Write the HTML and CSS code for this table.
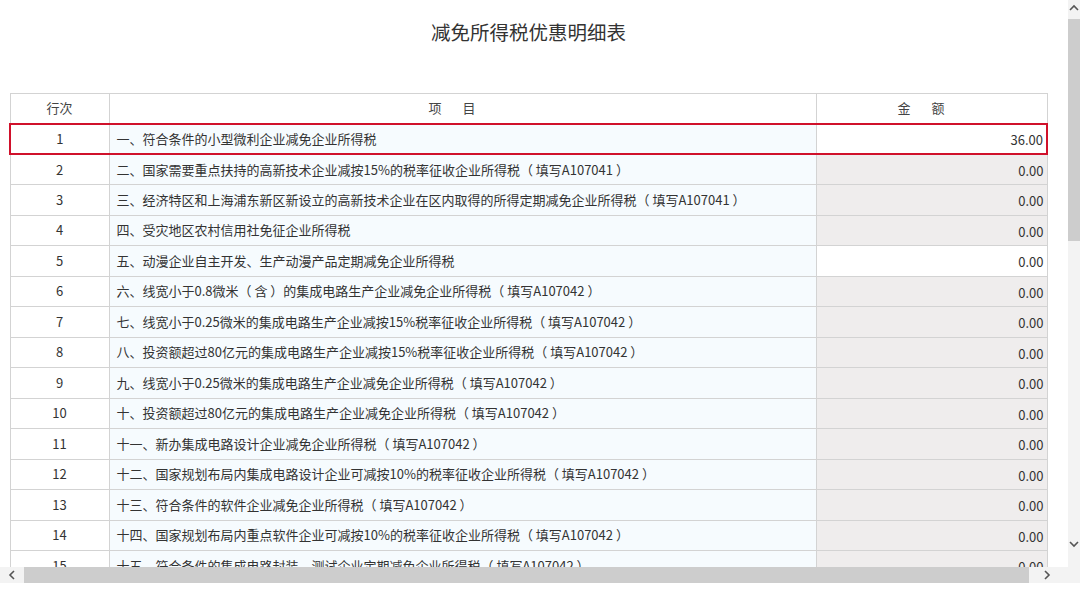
FILE: index.html
```html
<!DOCTYPE html>
<html lang="zh-CN">
<head>
<meta charset="utf-8">
<title>减免所得税优惠明细表</title>
<link rel="stylesheet" href="styles.css">
</head>
<body>
<div class="page">
  <div class="main">
    <div class="content">
      <h1 class="title">减免所得税优惠明细表</h1>
      <table class="grid">
        <colgroup><col class="c-no"><col class="c-item"><col class="c-amt"></colgroup>
        <thead>
          <tr><th>行次</th><th class="spaced">项目</th><th class="spaced">金额</th></tr>
        </thead>
        <tbody>
          <tr class="active"><td class="no">1</td><td class="item">一、符合条件的小型微利企业减免企业所得税</td><td class="amt edit">36.00</td></tr>
          <tr><td class="no">2</td><td class="item">二、国家需要重点扶持的高新技术企业减按15%的税率征收企业所得税（ 填写A107041 ）</td><td class="amt">0.00</td></tr>
          <tr><td class="no">3</td><td class="item">三、经济特区和上海浦东新区新设立的高新技术企业在区内取得的所得定期减免企业所得税（ 填写A107041 ）</td><td class="amt">0.00</td></tr>
          <tr><td class="no">4</td><td class="item">四、受灾地区农村信用社免征企业所得税</td><td class="amt">0.00</td></tr>
          <tr><td class="no">5</td><td class="item">五、动漫企业自主开发、生产动漫产品定期减免企业所得税</td><td class="amt edit">0.00</td></tr>
          <tr><td class="no">6</td><td class="item">六、线宽小于0.8微米（ 含 ）的集成电路生产企业减免企业所得税（ 填写A107042 ）</td><td class="amt">0.00</td></tr>
          <tr><td class="no">7</td><td class="item">七、线宽小于0.25微米的集成电路生产企业减按15%税率征收企业所得税（ 填写A107042 ）</td><td class="amt">0.00</td></tr>
          <tr><td class="no">8</td><td class="item">八、投资额超过80亿元的集成电路生产企业减按15%税率征收企业所得税（ 填写A107042 ）</td><td class="amt">0.00</td></tr>
          <tr><td class="no">9</td><td class="item">九、线宽小于0.25微米的集成电路生产企业减免企业所得税（ 填写A107042 ）</td><td class="amt">0.00</td></tr>
          <tr><td class="no">10</td><td class="item">十、投资额超过80亿元的集成电路生产企业减免企业所得税（ 填写A107042 ）</td><td class="amt">0.00</td></tr>
          <tr><td class="no">11</td><td class="item">十一、新办集成电路设计企业减免企业所得税（ 填写A107042 ）</td><td class="amt">0.00</td></tr>
          <tr><td class="no">12</td><td class="item">十二、国家规划布局内集成电路设计企业可减按10%的税率征收企业所得税（ 填写A107042 ）</td><td class="amt">0.00</td></tr>
          <tr><td class="no">13</td><td class="item">十三、符合条件的软件企业减免企业所得税（ 填写A107042 ）</td><td class="amt">0.00</td></tr>
          <tr><td class="no">14</td><td class="item">十四、国家规划布局内重点软件企业可减按10%的税率征收企业所得税（ 填写A107042 ）</td><td class="amt">0.00</td></tr>
          <tr><td class="no">15</td><td class="item">十五、符合条件的集成电路封装、测试企业定期减免企业所得税（ 填写A107042 ）</td><td class="amt">0.00</td></tr>
        </tbody>
      </table>
    </div>
    <div class="vscroll">
      <svg class="arrow" width="12" height="16" viewBox="0 0 12 16"><polyline points="2,10 6,6 10,10" fill="none" stroke="#555" stroke-width="1.6"/></svg>
      <div class="vthumb"></div>
      <div class="vtrack"></div>
      <svg class="arrow" width="12" height="16" viewBox="0 0 12 16"><polyline points="2,6 6,10 10,6" fill="none" stroke="#555" stroke-width="1.6"/></svg>
      <div class="vend"></div>
    </div>
  </div>
  <div class="hscroll">
    <svg class="harrow" width="16" height="16" viewBox="0 0 16 16"><polyline points="10,4 6,8 10,12" fill="none" stroke="#555" stroke-width="1.6"/></svg>
    <div class="hthumb"></div>
    <svg class="harrow" width="16" height="16" viewBox="0 0 16 16"><polyline points="6,4 10,8 6,12" fill="none" stroke="#555" stroke-width="1.6"/></svg>
    <div class="hend"></div>
  </div>
</div>
</body>
</html>
```

FILE: styles.css
```css
html, body {
  margin: 0;
  padding: 0;
  background: #ffffff;
}
body {
  font-family: "Noto Sans CJK SC", "Liberation Sans", sans-serif;
  color: #333333;
}
.page {
  width: 1080px;
  height: 591px;
  display: flex;
  flex-direction: column;
  overflow: hidden;
}
.main {
  display: flex;
  height: 567px;
}
.content {
  width: 1068px;
  height: 567px;
  overflow: hidden;
  padding-left: 9px;
  box-sizing: border-box;
}
.title {
  margin: 0;
  width: 1039px;
  height: 93px;
  padding-top: 18px;
  box-sizing: border-box;
  font-size: 19.5px;
  line-height: 28px;
  font-weight: normal;
  text-align: center;
  color: #333;
}
.grid {
  border-collapse: collapse;
  table-layout: fixed;
  width: 1037px;
  font-size: 13px;
}
.c-no { width: 99px; }
.c-item { width: 707px; }
.c-amt { width: 231px; }
.grid th, .grid td {
  border: 1px solid #d3d3d3;
  padding: 0;
  height: 30.5px;
  box-sizing: border-box;
  white-space: pre;
  overflow: hidden;
  line-height: 20px;
}
.grid th {
  height: 30px;
  font-weight: normal;
  background: #ffffff;
  color: #444;
  text-align: center;
}
.grid th.spaced {
  letter-spacing: 21px;
}
.grid td.no {
  text-align: center;
  background: #ffffff;
}
.grid td.item {
  padding-left: 7px;
  background: #f6fbfe;
}
.grid td.amt {
  text-align: right;
  padding-right: 3px;
  background: #efeded;
  padding-top: 3px;
}
.grid td.amt.edit {
  background: #ffffff;
}
.grid tr.active td {
  border-top: 2px solid #d0112b;
  border-bottom: 2px solid #d0112b;
}
.grid tr.active td:first-child {
  border-left: 2px solid #d0112b;
}
.grid tr.active td:last-child {
  border-right: 2px solid #d0112b;
}
.vscroll {
  width: 12px;
  display: flex;
  flex-direction: column;
  background: #f3f3f3;
}
.vscroll .arrow {
  display: block;
  flex: none;
}
.vthumb {
  height: 222px;
  margin-top: 3px;
  background: #cdcdcd;
}
.vtrack {
  height: 295px;
}
.vend {
  flex: 1;
}
.hscroll {
  height: 16px;
  display: flex;
  align-items: center;
  background: #f3f3f3;
  padding-left: 4px;
}
.harrow {
  display: block;
  flex: none;
}
.hthumb {
  width: 1005px;
  height: 16px;
  margin-left: 4px;
  margin-right: 10px;
  background: #cdcdcd;
}
.hend {
  flex: 1;
}
```
